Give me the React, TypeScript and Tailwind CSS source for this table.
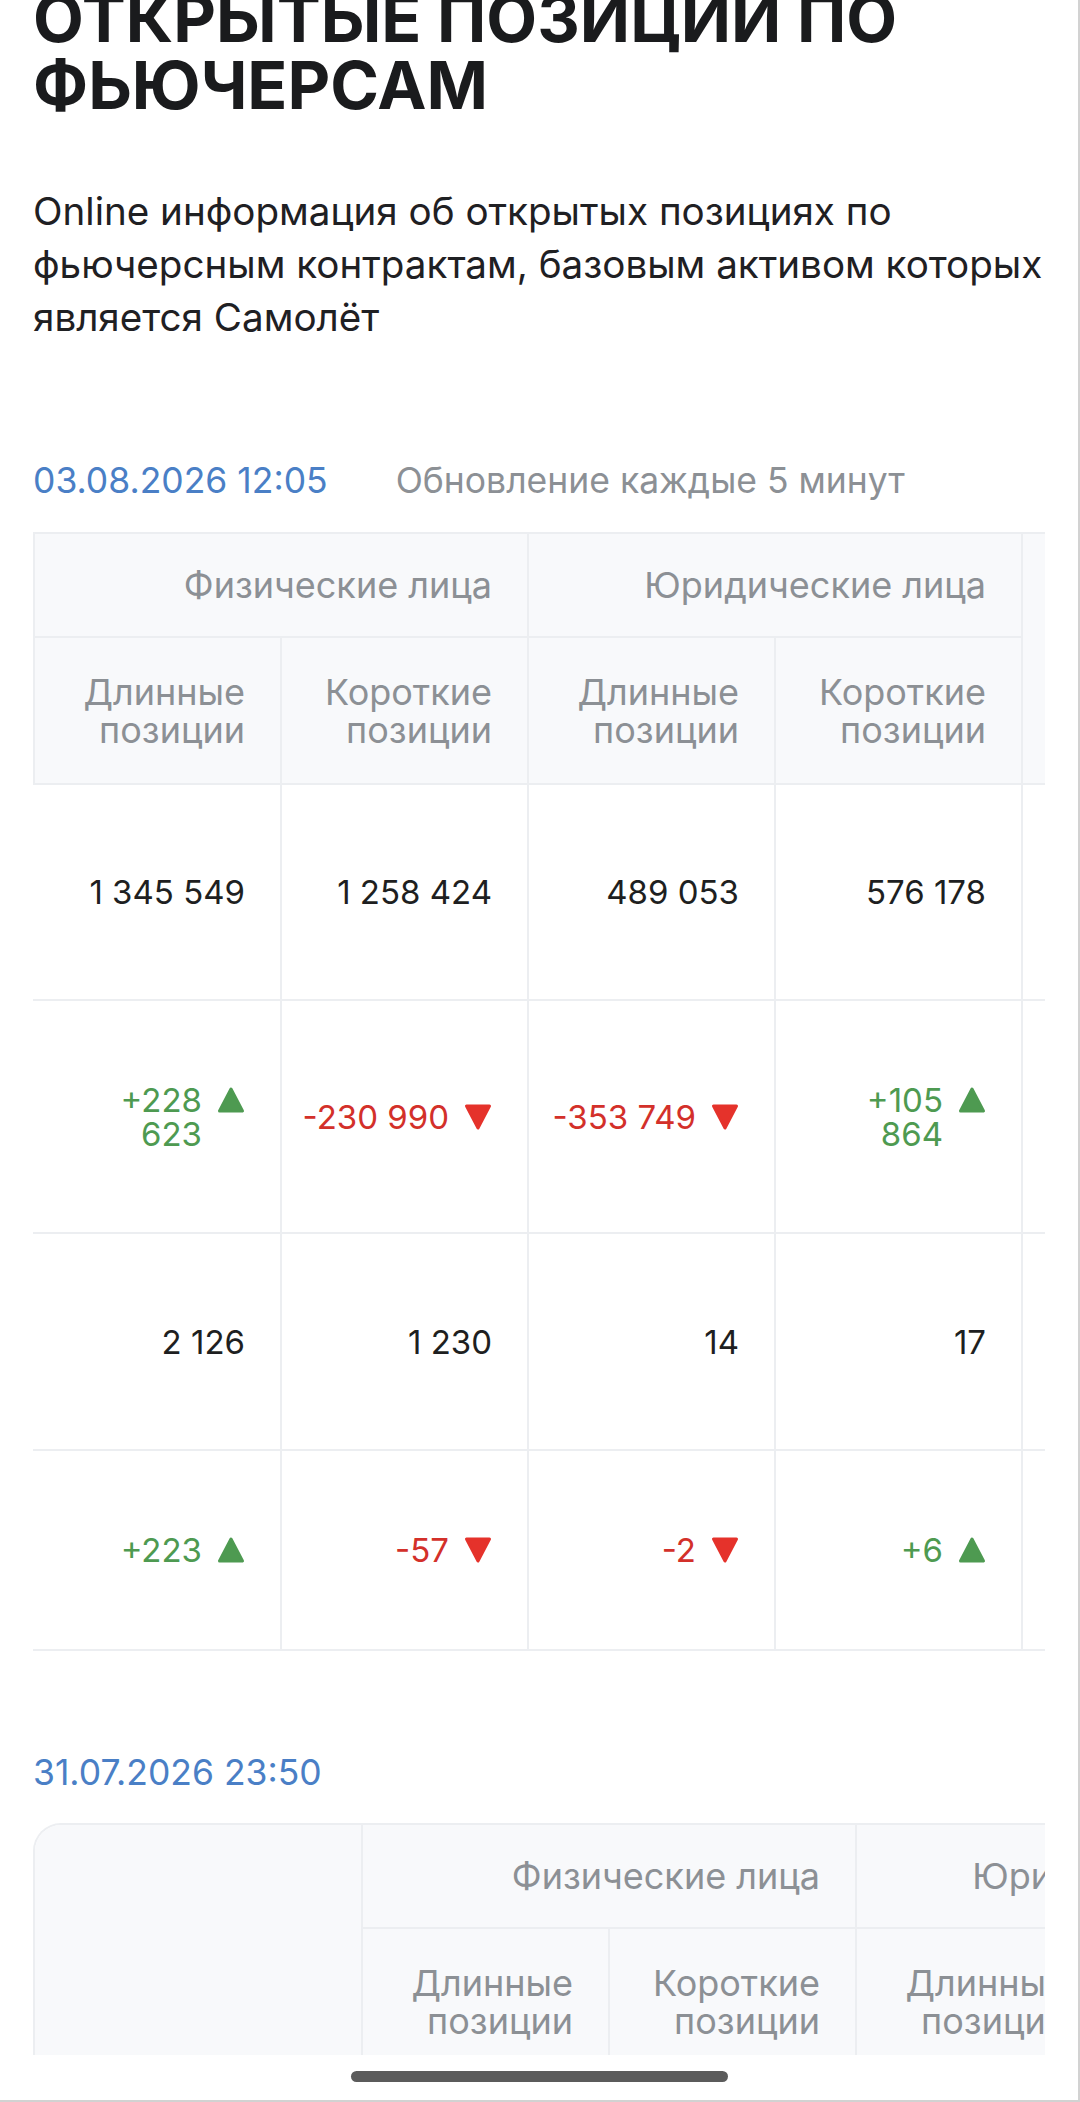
import React, { useLayoutEffect, useRef } from "react";

type Change = "up" | "down";
type Cell = { lines: string[]; dir?: Change };
type Row = { label: string; cells: Cell[] };

const rowHeights = "grid-rows-[104px_147px_216px_233px_217px_200px]";

const current: Row[] = [
  {
    label: "Количество открытых позиций",
    cells: [
      { lines: ["1 345 549"] },
      { lines: ["1 258 424"] },
      { lines: ["489 053"] },
      { lines: ["576 178"] },
      { lines: ["3 669 204"] },
    ],
  },
  {
    label: "Изменение к предыдущему дню",
    cells: [
      { lines: ["+228", "623"], dir: "up" },
      { lines: ["-230 990"], dir: "down" },
      { lines: ["-353 749"], dir: "down" },
      { lines: ["+105", "864"], dir: "up" },
      { lines: ["-250 252"], dir: "down" },
    ],
  },
  {
    label: "Количество лиц",
    cells: [
      { lines: ["2 126"] },
      { lines: ["1 230"] },
      { lines: ["14"] },
      { lines: ["17"] },
      { lines: ["3 387"] },
    ],
  },
  {
    label: "Изменение количества лиц",
    cells: [
      { lines: ["+223"], dir: "up" },
      { lines: ["-57"], dir: "down" },
      { lines: ["-2"], dir: "down" },
      { lines: ["+6"], dir: "up" },
      { lines: ["+170"], dir: "up" },
    ],
  },
];

const Triangle = ({ dir }: { dir: Change }) => {
  const color = dir === "up" ? "#4e9a51" : "#e5322b";
  return (
    <svg width="28" height="28" viewBox="0 0 28 28" className="mt-[3px] shrink-0">
      {dir === "up" ? (
        <path d="M14 3 L25.5 25 L2.5 25 Z" fill={color} stroke={color} strokeWidth="3" strokeLinejoin="round" />
      ) : (
        <path d="M2.5 3 L25.5 3 L14 25 Z" fill={color} stroke={color} strokeWidth="3" strokeLinejoin="round" />
      )}
    </svg>
  );
};

const cellBase = "border-r-2 border-b-2 border-[#eceef1] flex items-center justify-end pr-[35px]";
const headBase = cellBase + " bg-[#f8f9fb] text-[#8c9095] text-[36px] leading-[38px] text-right";

const PositionsTable = ({ rows, offset }: { rows: Row[]; offset: number }) => {
  const ref = useRef<HTMLDivElement>(null);
  useLayoutEffect(() => {
    if (ref.current) ref.current.scrollLeft = offset;
  }, [offset]);

  return (
    <div ref={ref} className="w-full overflow-hidden">
      <div
        className={
          "grid w-max grid-cols-[328px_247px_247px_247px_247px_247px] border-l-2 border-t-2 border-[#eceef1] rounded-tl-[28px] overflow-hidden " +
          rowHeights
        }
      >
        <div className={headBase + " row-span-2"}></div>
        <div className={headBase + " col-span-2"}>Физические лица</div>
        <div className={headBase + " col-span-2"}>Юридические лица</div>
        <div className={headBase + " row-span-2"}>Всего</div>
        <div className={headBase}>Длинные<br />позиции</div>
        <div className={headBase}>Короткие<br />позиции</div>
        <div className={headBase}>Длинные<br />позиции</div>
        <div className={headBase}>Короткие<br />позиции</div>

        {rows.map((row) => (
          <React.Fragment key={row.label}>
            <div className="border-b-2 border-[#eceef1] flex items-center pl-[35px] pr-[20px] text-[30px] leading-[36px] text-[#1e1f21]">
              {row.label}
            </div>
            {row.cells.map((cell, i) => (
              <div key={i} className={cellBase + " text-[33px] leading-[34px]"}>
                <div className="flex items-start gap-[15px]">
                  <div
                    className={
                      "text-right " +
                      (cell.dir === "up"
                        ? "text-[#4e9a51]"
                        : cell.dir === "down"
                        ? "text-[#d3302a]"
                        : "text-[#1e1f21]")
                    }
                  >
                    {cell.lines.map((l) => (
                      <div key={l}>{l}</div>
                    ))}
                  </div>
                  {cell.dir && <Triangle dir={cell.dir} />}
                </div>
              </div>
            ))}
          </React.Fragment>
        ))}
      </div>
    </div>
  );
};

export default function App() {
  return (
    <div
      className="w-[1080px] h-[2102px] overflow-hidden bg-white flex flex-col border-r-2 border-b-2 border-[#d2d2d2]"
      style={{ fontFamily: "Inter, 'Noto Sans', sans-serif" }}
    >
      <div className="flex-1 overflow-hidden px-[33px]">
        <h1 className="-mt-[15px] text-[66px] leading-[67px] font-bold text-[#1a1b1d] uppercase">
          Открытые позиции по
          <br />
          фьючерсам
        </h1>

        <p className="mt-[66px] text-[38.6px] leading-[53px] text-[#1f2023]">
          Online информация об открытых позициях по фьючерсным контрактам, базовым активом которых является Самолёт
        </p>

        <div className="mt-[116px] flex items-center gap-[68px] text-[35.5px] leading-[42px]">
          <span className="text-[#4a7fc6]">03.08.2026 12:05</span>
          <span className="text-[#8c9095]">Обновление каждые 5 минут</span>
        </div>

        <div className="mt-[30px]">
          <PositionsTable rows={current} offset={328} />
        </div>

        <div className="mt-[101px] text-[35.5px] leading-[42px] text-[#4a7fc6]">31.07.2026 23:50</div>

        <div className="mt-[29px]">
          <PositionsTable rows={current} offset={0} />
        </div>
      </div>

      <div className="h-[45px] shrink-0 flex justify-center bg-white">
        <div className="mt-[16px] h-[11px] w-[377px] rounded-full bg-[#5b5b5b]"></div>
      </div>
    </div>
  );
}
